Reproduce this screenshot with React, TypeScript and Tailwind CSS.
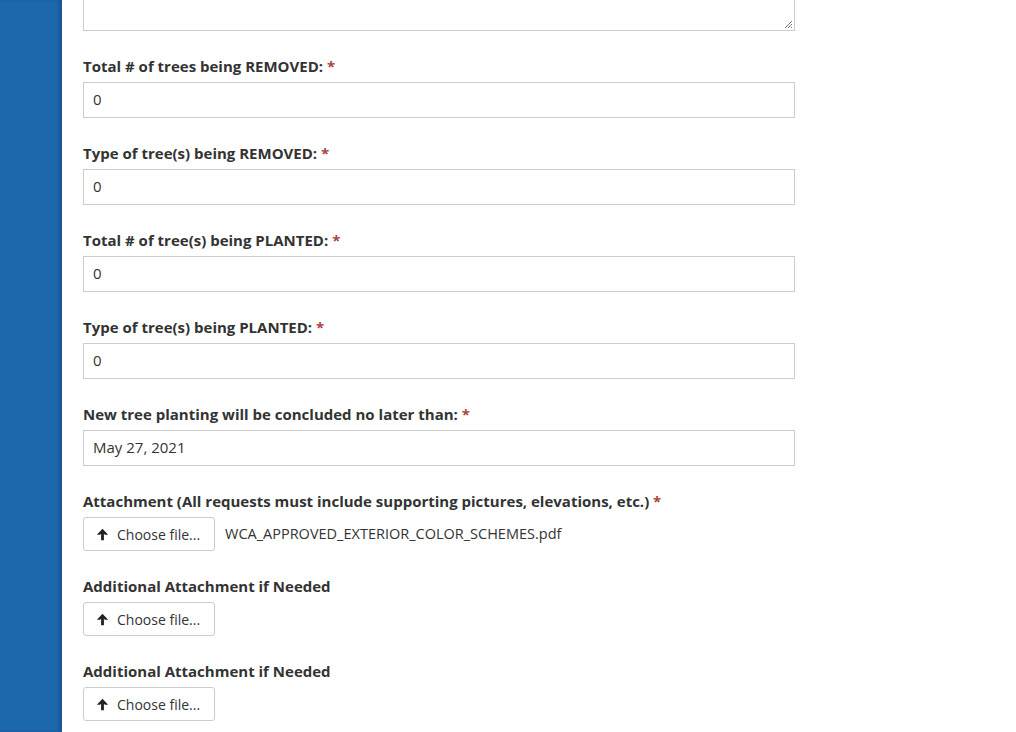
import React from "react";

const Star = () => <span className="text-[#a94442]"> *</span>;

function Label({ text, required }: { text: string; required?: boolean }) {
  return (
    <label className="h-[20px] shrink-0 whitespace-nowrap text-[15px] font-bold leading-[20px] text-[#333]">
      {text}
      {required && <Star />}
    </label>
  );
}

function Field({ label, value }: { label: string; value: string }) {
  return (
    <div className="flex shrink-0 flex-col">
      <Label text={label} required />
      <div className="mt-[6px] flex h-[36px] w-[712px] shrink-0 items-center border border-[#ccc] bg-white pb-[1px] pl-[9px] text-[15px] text-[#333]">
        {value}
      </div>
    </div>
  );
}

function FileField({ label, required, filename }: { label: string; required?: boolean; filename?: string }) {
  return (
    <div className="flex shrink-0 flex-col">
      <Label text={label} required={required} />
      <div className="mt-[6px] flex shrink-0 items-center">
        <div className="flex h-[34px] w-[132px] items-center gap-[8px] rounded-[3px] border border-[#ccc] bg-white pl-[12px] text-[14px] text-[#333]">
          <svg width="13" height="13" viewBox="0 0 12 12" className="mt-[1px]">
            <path d="M6 0.8 L11.2 6.2 L8.2 6.2 L7.3 5.2 L7.3 11.2 L4.7 11.2 L4.7 5.2 L3.8 6.2 L0.8 6.2 Z" fill="#222" />
          </svg>
          <span>Choose file...</span>
        </div>
        {filename && <span className="ml-[10px] text-[14.5px] text-[#333]">{filename}</span>}
      </div>
    </div>
  );
}

export default function App() {
  return (
    <div
      className="flex h-[732px] w-[1016px] overflow-hidden bg-white"
      style={{ fontFamily: '"Open Sans", "DejaVu Sans", sans-serif' }}
    >
      <div className="h-full w-[62px] shrink-0 bg-[#1d67ac] shadow-[inset_-3px_0_3px_rgba(0,0,0,0.15)]" />
      <div className="flex shrink-0 flex-col pl-[21px]">
        <div className="relative mt-[-40px] h-[71px] w-[712px] shrink-0 border border-[#ccc] bg-white">
          <svg className="absolute bottom-[1px] right-[1px]" width="10" height="10" viewBox="0 0 10 10">
            <path d="M9 2 L2 9 M9 5 L5 9 M9 8 L8 9" stroke="#777" strokeWidth="1" />
          </svg>
        </div>
        <div className="mt-[25px] flex shrink-0 flex-col gap-[25px]">
          <Field label="Total # of trees being REMOVED:" value="0" />
          <Field label="Type of tree(s) being REMOVED:" value="0" />
          <Field label="Total # of tree(s) being PLANTED:" value="0" />
          <Field label="Type of tree(s) being PLANTED:" value="0" />
          <Field label="New tree planting will be concluded no later than:" value="May 27, 2021" />
          <FileField
            label="Attachment (All requests must include supporting pictures, elevations, etc.)"
            required
            filename="WCA_APPROVED_EXTERIOR_COLOR_SCHEMES.pdf"
          />
          <FileField label="Additional Attachment if Needed" />
          <FileField label="Additional Attachment if Needed" />
        </div>
      </div>
    </div>
  );
}
